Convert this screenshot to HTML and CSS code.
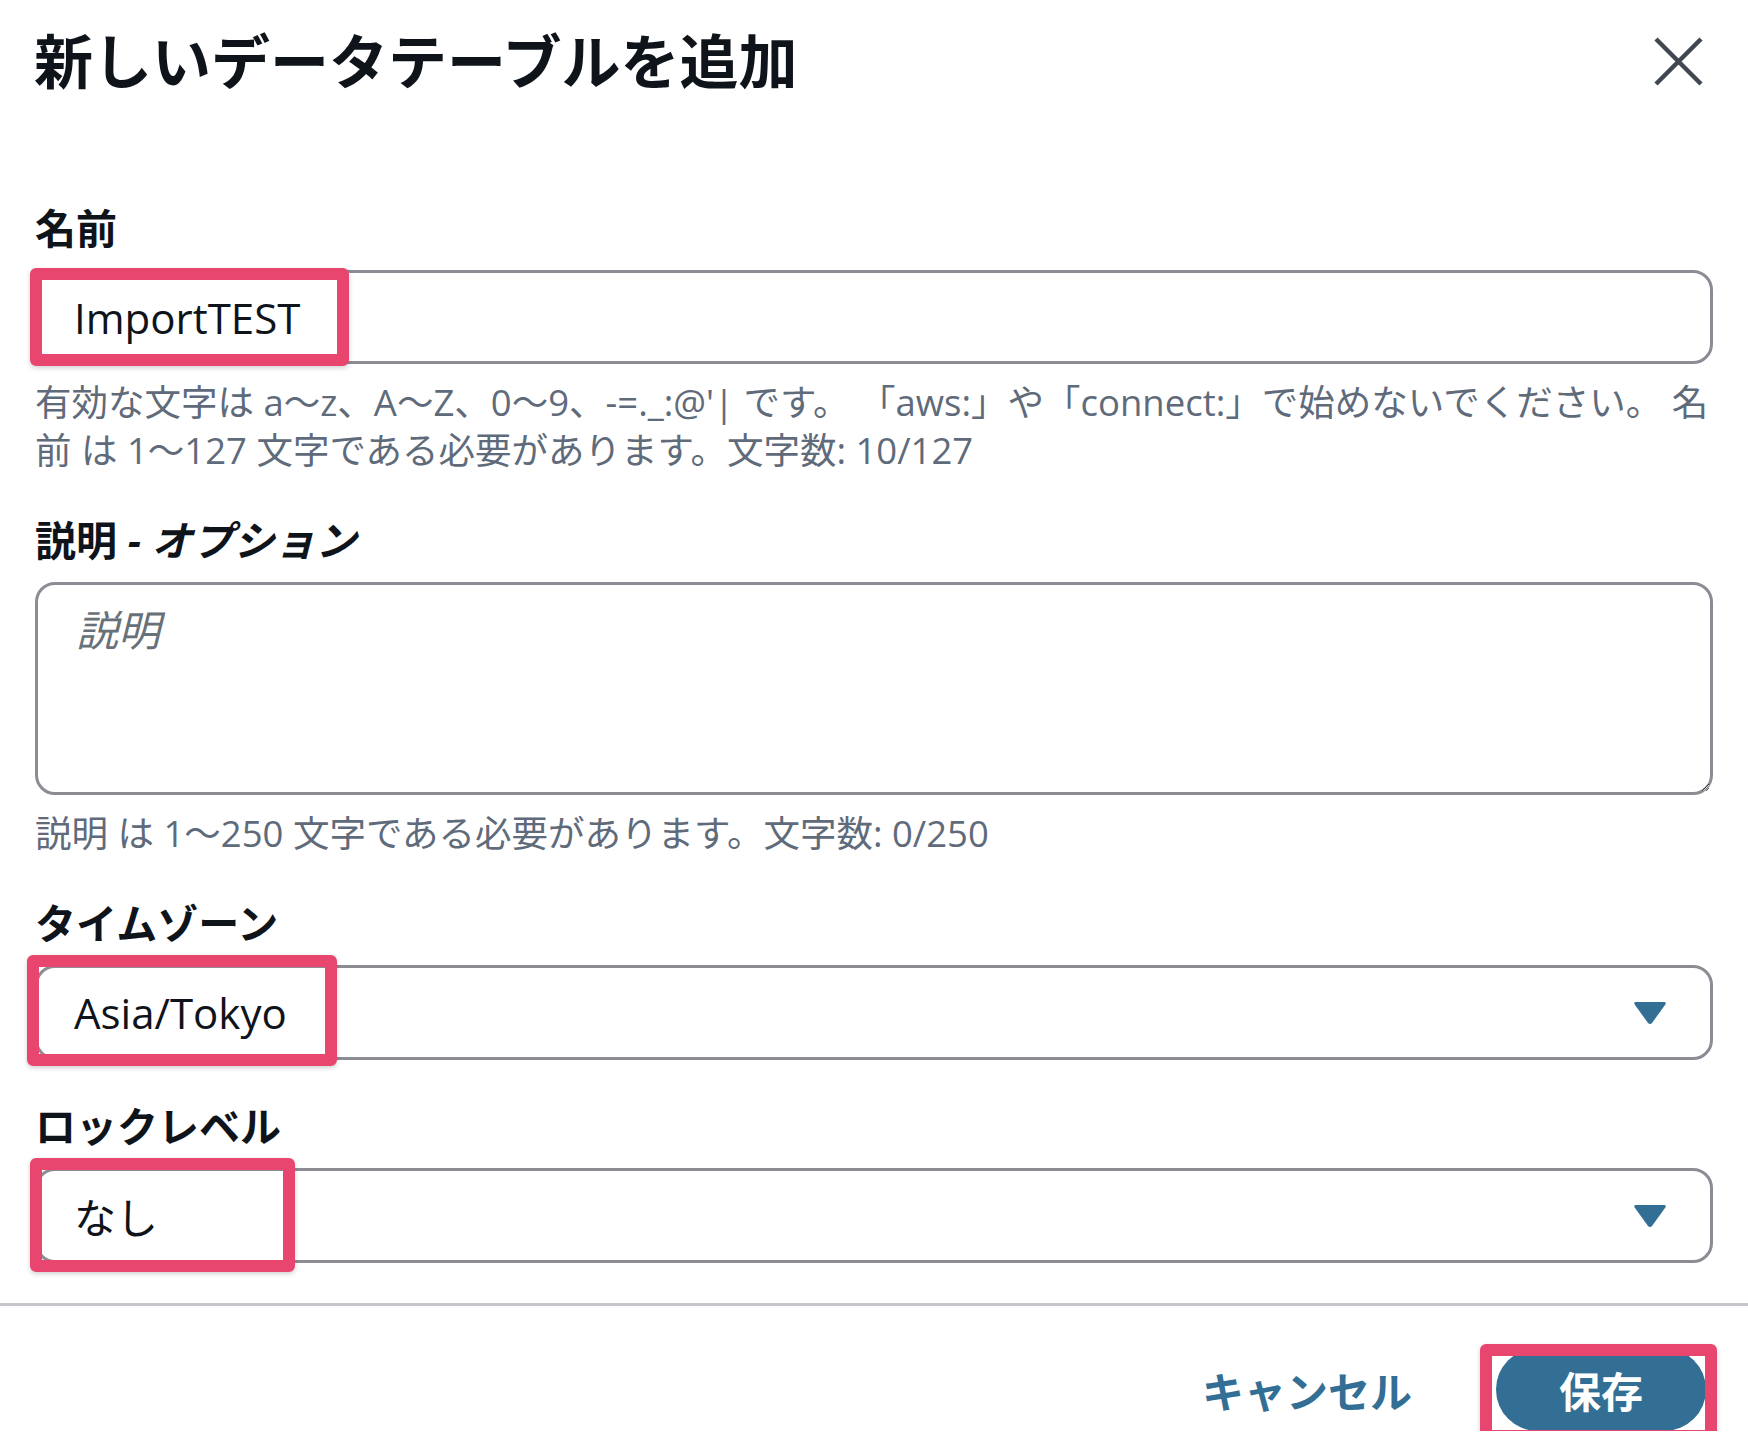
FILE: index.html
```html
<!DOCTYPE html>
<html lang="ja">
<head>
<meta charset="utf-8">
<title>新しいデータテーブルを追加</title>
<link rel="stylesheet" href="styles.css">
</head>
<body>
<div class="dialog">
  <header class="dialog-header">
    <h1 class="dialog-title">新しいデータテーブルを追加</h1>
    <button class="close-btn" type="button" aria-label="閉じる">
      <svg viewBox="0 0 49 49" width="49" height="49" aria-hidden="true">
        <path d="M2 2 L47 47 M47 2 L2 47" stroke="#414750" stroke-width="4.5" fill="none"/>
      </svg>
    </button>
  </header>

  <div class="dialog-body">
    <div class="field">
      <label class="field-label" for="table-name">名前</label>
      <div class="control">
        <input class="text-input" id="table-name" type="text" value="ImportTEST">
        <span class="mark mark-name"></span>
      </div>
      <p class="field-hint">有効な文字は a〜z、A〜Z、0〜9、-=._:@'| です。 「aws:」や「connect:」で始めないでください。 名前 は 1〜127 文字である必要があります。文字数: 10/127</p>
    </div>

    <div class="field">
      <label class="field-label" for="table-desc">説明 <i>- オプション</i></label>
      <div class="control">
        <textarea class="text-area" id="table-desc" placeholder="説明"></textarea>
      </div>
      <p class="field-hint">説明 は 1〜250 文字である必要があります。文字数: 0/250</p>
    </div>

    <div class="field">
      <label class="field-label">タイムゾーン</label>
      <div class="control">
        <div class="select-trigger">
          <span>Asia/Tokyo</span>
          <svg class="caret" viewBox="0 0 34 24" width="34" height="24" aria-hidden="true">
            <path d="M3 1 H31 Q34 1 32 4 L19 22 Q17 24 15 22 L2 4 Q0 1 3 1 Z" fill="#336f95"/>
          </svg>
        </div>
        <span class="mark mark-tz"></span>
      </div>
    </div>

    <div class="field">
      <label class="field-label">ロックレベル</label>
      <div class="control">
        <div class="select-trigger">
          <span>なし</span>
          <svg class="caret" viewBox="0 0 34 24" width="34" height="24" aria-hidden="true">
            <path d="M3 1 H31 Q34 1 32 4 L19 22 Q17 24 15 22 L2 4 Q0 1 3 1 Z" fill="#336f95"/>
          </svg>
        </div>
        <span class="mark mark-lock"></span>
      </div>
    </div>
  </div>

  <footer class="dialog-footer">
    <button class="btn-link" type="button">キャンセル</button>
    <div class="control">
      <button class="btn-primary" type="button">保存</button>
      <span class="mark mark-save"></span>
    </div>
  </footer>
</div>
</body>
</html>
```

FILE: styles.css
```css
* {
  box-sizing: border-box;
}

body {
  margin: 0;
  background: #ffffff;
  font-family: "Open Sans", "Noto Sans CJK JP", sans-serif;
  color: #16191f;
}

/* header: title + close */
.dialog-header {
  display: flex;
  align-items: center;
  justify-content: space-between;
  height: 122px;
  padding: 0 45px 0 34px;
}

.dialog-title {
  margin: 0;
  font-size: 59px;
  font-weight: 700;
  line-height: 1;
  color: #0f141a;
}

.close-btn {
  display: flex;
  border: 0;
  background: none;
  padding: 0;
  cursor: pointer;
}

/* form */
.dialog-body {
  padding: 78px 35px 40px;
}

.field + .field {
  margin-top: 38px;
}

.field-label {
  display: block;
  font-size: 41px;
  font-weight: 700;
  line-height: 56px;
  margin-bottom: 14px;
  color: #0f141a;
}

.field-label i {
  font-style: italic;
}

.control {
  position: relative;
}

.text-input,
.text-area,
.select-trigger {
  display: block;
  width: 100%;
  border: 3px solid #8c8c94;
  border-radius: 20px;
  background: #ffffff;
  font-family: inherit;
  font-size: 42px;
  color: #0f141a;
}

.text-input {
  height: 94px;
  padding: 0 36px;
  outline: none;
}

.text-area {
  height: 213px;
  padding: 17px 38px;
  line-height: 56px;
  resize: vertical;
  outline: none;
}

.text-area::placeholder {
  color: #687078;
  font-style: italic;
}

.select-trigger {
  display: flex;
  align-items: center;
  justify-content: space-between;
  height: 95px;
  padding: 0 43px 0 36px;
}

.caret {
  display: block;
}

.field-hint {
  margin: 14px 0 0;
  font-size: 36.5px;
  line-height: 48px;
  color: #5f6b7a;
}

/* footer */
.dialog-footer {
  display: flex;
  justify-content: flex-end;
  align-items: center;
  gap: 84px;
  border-top: 3px solid #c6c6cd;
  padding: 42px 42px 0 0;
}

.btn-link {
  border: 0;
  background: none;
  padding: 0;
  font-family: inherit;
  font-size: 42px;
  font-weight: 700;
  color: #336f95;
  cursor: pointer;
}

.btn-primary {
  display: block;
  width: 210px;
  height: 83px;
  border: 0;
  border-radius: 42px;
  background: #336f95;
  color: #ffffff;
  font-family: inherit;
  font-size: 42px;
  font-weight: 700;
  cursor: pointer;
}

/* highlight frames drawn over controls */
.mark {
  position: absolute;
  border: 12px solid #e8466e;
  border-radius: 6px;
  box-shadow: 0 2px 5px rgba(0, 0, 0, 0.18);
  pointer-events: none;
}

.mark-name {
  left: -5px;
  top: -2px;
  width: 319px;
  height: 98px;
}

.mark-tz {
  left: -8px;
  top: -10px;
  width: 310px;
  height: 111px;
}

.mark-lock {
  left: -5px;
  top: -10px;
  width: 265px;
  height: 114px;
}

.mark-save {
  left: -16px;
  top: -4px;
  width: 237px;
  height: 98px;
}
```
